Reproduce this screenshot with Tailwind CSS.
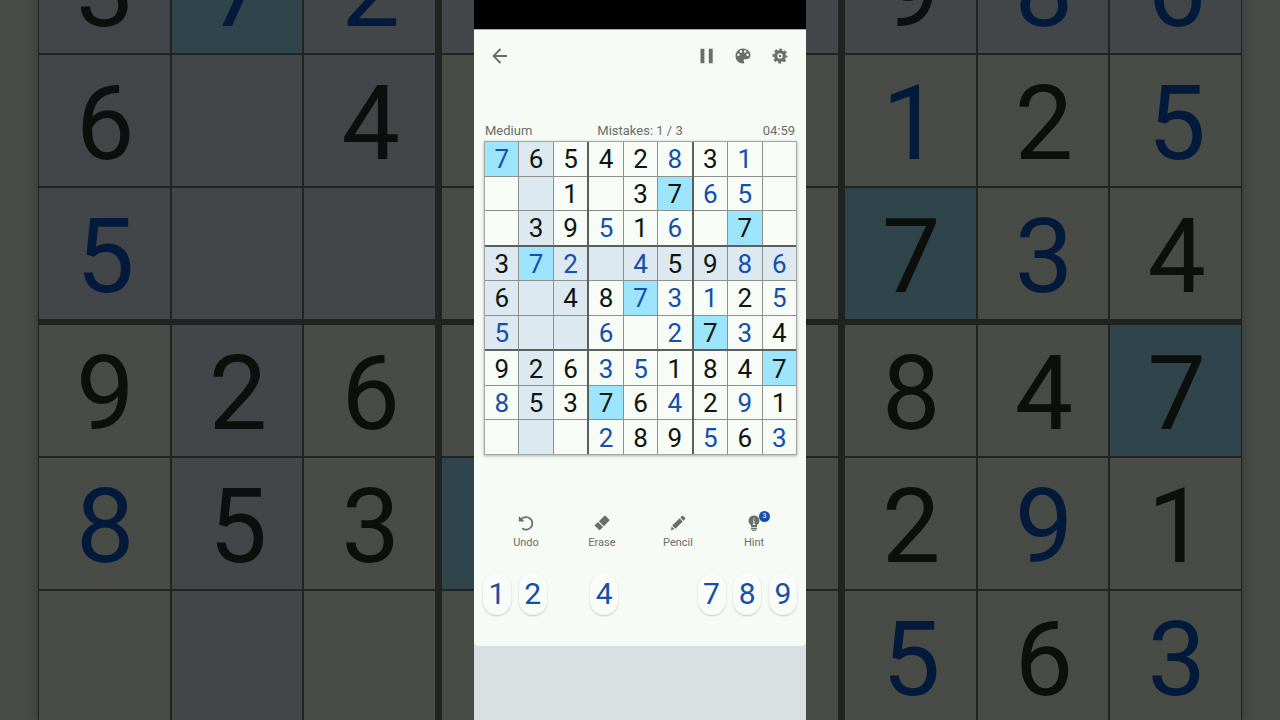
<!DOCTYPE html>
<html lang="en">

<head>
    <meta charset="UTF-8">
    <meta name="viewport" content="width=device-width, initial-scale=1.0">
    <title>Sudoku</title>
    <script src="https://cdn.jsdelivr.net/npm/@tailwindcss/browser@4"></script>
</head>

<body class="relative flex h-screen justify-center overflow-hidden bg-[#494b47] font-['Roboto',sans-serif]">

    <!-- Enlarged, dimmed board behind the phone -->
    <div class="absolute inset-0 flex items-end justify-center overflow-hidden" aria-hidden="true">
        <div id="backdrop"
            class="-mb-[3px] grid w-[1204px] shrink-0 grid-cols-3 gap-x-[7px] gap-y-[6px] border border-[#212320] bg-[#212320] shadow-[0_0_10px_rgba(0,0,0,0.3)]">
        </div>
    </div>

    <!-- Phone -->
    <main class="relative flex w-[332px] flex-col bg-[#dae0e2]">
        <div class="h-[29px] bg-black"></div>
        <div class="flex flex-col rounded-b-[5px] border-t border-[#a9ada9] bg-[#f6fbf5] px-2.5 pb-[31px] text-[#6a6e6a]">
            <nav class="flex h-[51px] items-center justify-between px-1.5">
                <button type="button" aria-label="Back">
                    <svg class="size-5" viewBox="0 0 20 20" fill="none" stroke="currentColor" stroke-width="1.800">
                        <path d="M17 10H4M10.500 3L3.500 10l7 7" />
                    </svg>
                </button>
                <div class="flex items-center gap-[17px]">
                    <button type="button" aria-label="Pause">
                        <svg class="size-5" viewBox="0 0 20 20" fill="currentColor">
                            <path d="M4.500 2.700h3.900v14.600H4.500zM12.800 2.700h3.900v14.600h-3.900z" />
                        </svg>
                    </button>
                    <button type="button" aria-label="Theme">
                        <svg class="size-5" viewBox="0 0 24 24" fill="currentColor">
                            <path d="M12 3c-4.970 0-9 4.030-9 9s4.030 9 9 9c.83 0 1.500-.67 1.500-1.500 0-.39-.15-.74-.39-1.010-.23-.26-.38-.61-.38-.99 0-.83.67-1.500 1.500-1.500H16c2.760 0 5-2.240 5-5 0-4.420-4.030-8-9-8zm-5.500 9c-.83 0-1.500-.67-1.500-1.500S5.670 9 6.500 9 8 9.670 8 10.500 7.330 12 6.500 12zm3-4C8.670 8 8 7.330 8 6.500S8.670 5 9.500 5s1.500.67 1.500 1.500S10.330 8 9.500 8zm5 0c-.83 0-1.500-.67-1.500-1.500S13.670 5 14.500 5s1.500.67 1.500 1.500S15.330 8 14.500 8zm3 4c-.83 0-1.500-.67-1.500-1.500S16.670 9 17.500 9s1.500.67 1.500 1.500-.67 1.500-1.500 1.500z" />
                        </svg>
                    </button>
                    <button type="button" aria-label="Settings">
                        <svg class="size-5" viewBox="0 0 20 20" fill="none" stroke="currentColor">
                            <circle cx="10" cy="10" r="4.300" stroke-width="3.200" />
                            <circle cx="10" cy="10" r="6.500" stroke-width="2" stroke-dasharray="2.900 2.205" stroke-dashoffset="1.450" />
                            <circle cx="10" cy="10" r="1.200" fill="currentColor" stroke="none" />
                        </svg>
                    </button>
                </div>
            </nav>

            <section class="mt-[41px]">
                <div class="grid grid-cols-3 px-px pb-px text-[13px] leading-[18px]">
                    <span>Medium</span>
                    <span class="text-center">Mistakes: 1 / 3</span>
                    <span class="text-right">04:59</span>
                </div>
                <div id="board"
                    class="-mr-px grid h-[314px] grid-cols-3 grid-rows-3 gap-0.5 border border-[#a3a7a3] bg-[#5c605d] shadow-[0_1px_3px_rgba(0,0,0,0.3)]">
                </div>
            </section>

            <section class="mt-[60px] grid grid-cols-4 px-1 text-[11px] leading-4">
                <button type="button" class="flex flex-col items-center gap-1">
                    <svg class="size-4" viewBox="0 0 16 16" fill="none" stroke="currentColor" stroke-width="1.700">
                        <path d="M3.200 4.400A6.300 6.300 0 1 1 4.200 13.400" />
                        <path d="M.8.900v5.600h5.600z" fill="currentColor" stroke="none" />
                    </svg>
                    Undo
                </button>
                <button type="button" class="flex flex-col items-center gap-1">
                    <svg class="size-4" viewBox="0 0 16 16" fill="currentColor">
                        <path d="M10.300.9a1 1 0 0 1 1.400 0l3.500 3.500a1 1 0 0 1 0 1.400L9.800 11.200 4.900 6.300zM4.100 7.100l4.900 4.900-2.700 2.700a1 1 0 0 1-1.400 0L1 10.900a1 1 0 0 1 0-1.200z" />
                    </svg>
                    Erase
                </button>
                <button type="button" class="flex flex-col items-center gap-1">
                    <svg class="size-4" viewBox="0 0 16 16" fill="currentColor">
                        <path d="M11.800 1a1 1 0 0 1 1.400 0L15 2.800a1 1 0 0 1 0 1.400l-1.500 1.500-3.200-3.200zM9.600 3.200l3.200 3.200-7.400 7.400-3.200-3.200zM1.700 11.500l2.800 2.800-3.700.9z" />
                    </svg>
                    Pencil
                </button>
                <button type="button" class="flex flex-col items-center gap-1">
                    <span class="relative">
                        <svg class="size-4" viewBox="0 0 16 16">
                            <path fill="currentColor" d="M8 .4a5.300 5.300 0 0 0-3 9.700v2.200h6v-2.200A5.300 5.300 0 0 0 8 .4zM5 13h6v1.200H5zM5.800 14.700h4.400v1H5.800z" />
                            <path stroke="#f6fbf5" stroke-width="1" d="M8 3.400v1.200M7 5.900h1v3.400M6.700 9.400h2.600" fill="none" />
                        </svg>
                        <span
                            class="absolute -top-[4px] left-[13px] flex size-[11px] items-center justify-center rounded-full bg-[#144fa9] text-[7px] leading-none text-white">3</span>
                    </span>
                    Hint
                </button>
            </section>

            <section id="keypad" class="-mx-px mt-[22px] flex justify-between"></section>
        </div>
    </main>

    <script>
        // "b" after a digit marks one entered by the player, "" is an empty cell
        const rows = [
            ["7b", "6", "5", "4", "2", "8b", "3", "1b", ""],
            ["", "", "1", "", "3", "7", "6b", "5b", ""],
            ["", "3", "9", "5b", "1", "6b", "", "7", ""],
            ["3", "7b", "2b", "", "4b", "5", "9", "8b", "6b"],
            ["6", "", "4", "8", "7b", "3b", "1b", "2", "5b"],
            ["5b", "", "", "6b", "", "2b", "7", "3b", "4"],
            ["9", "2", "6", "3b", "5b", "1", "8", "4", "7"],
            ["8b", "5", "3", "7", "6", "4b", "2", "9b", "1"],
            ["", "", "", "2b", "8", "9", "5b", "6", "3b"]
        ];
        const selected = { row: 3, col: 1 };

        const light = {
            box: "grid grid-cols-3 grid-rows-3 gap-px bg-[#8d918e]",
            cell: "flex items-center justify-center pt-px text-[26px] leading-none",
            same: "bg-[#9ce5fd]",
            peer: "bg-[#dce9f0]",
            plain: "bg-[#f7fcf6]",
            given: "text-[#101410]",
            entered: "text-[#124fae]"
        };
        const dark = {
            box: "grid grid-cols-3 gap-0.5 bg-[#212422]",
            cell: "flex h-[131px] items-center justify-center pt-1.5 pl-0.5 text-[104px] leading-none",
            same: "bg-[#2f454b]",
            peer: "bg-[#424648]",
            plain: "bg-[#494b47]",
            given: "text-[#0c0f0c]",
            entered: "text-[#041a3a]"
        };

        function isPeer(r, c) {
            const sameBox = Math.floor(r / 3) === Math.floor(selected.row / 3) && Math.floor(c / 3) === Math.floor(selected.col / 3);
            return r === selected.row || c === selected.col || sameBox;
        }

        function drawBoard(id, theme, firstBand, tag) {
            const board = document.getElementById(id);
            for (let band = firstBand; band < 3; band++) {
                for (let stack = 0; stack < 3; stack++) {
                    const box = document.createElement("div");
                    box.className = theme.box;
                    for (let i = 0; i < 9; i++) {
                        const r = band * 3 + Math.floor(i / 3);
                        const c = stack * 3 + (i % 3);
                        const digit = rows[r][c].charAt(0);
                        const fill = digit === "7" ? theme.same : isPeer(r, c) ? theme.peer : theme.plain;
                        const ink = rows[r][c].endsWith("b") ? theme.entered : theme.given;
                        const cell = document.createElement(tag);
                        cell.className = theme.cell + " " + fill + " " + ink;
                        // the phone covers the middle boxes of the backdrop
                        if (tag === "button" || stack !== 1) {
                            cell.textContent = digit;
                        }
                        if (tag === "button") {
                            cell.type = "button";
                            cell.setAttribute("aria-label", `Row ${r + 1}, column ${c + 1}: ${digit || "empty"}`);
                        }
                        box.appendChild(cell);
                    }
                    board.appendChild(box);
                }
            }
        }

        drawBoard("backdrop", dark, 1, "div");
        drawBoard("board", light, 0, "button");

        // Finished digits leave a gap in the keypad
        const finished = [3, 5, 6];
        const keypad = document.getElementById("keypad");
        for (let n = 1; n <= 9; n++) {
            if (finished.includes(n)) {
                const gap = document.createElement("span");
                gap.className = "w-7";
                keypad.appendChild(gap);
            } else {
                const key = document.createElement("button");
                key.type = "button";
                key.className = "h-[42px] w-7 rounded-full bg-[#f9fcf9] text-[30px] leading-none text-[#144fa9] shadow-[0_1px_2px_rgba(0,0,0,0.2)]";
                key.textContent = n;
                keypad.appendChild(key);
            }
        }
    </script>
</body>

</html>
